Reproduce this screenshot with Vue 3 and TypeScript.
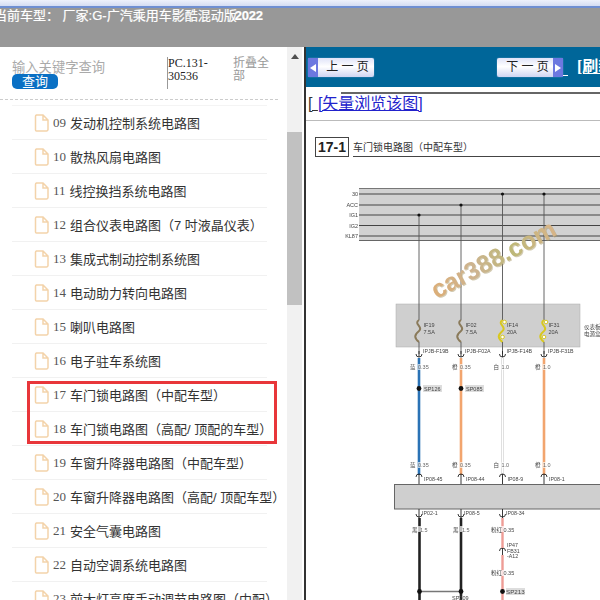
<script setup lang="ts">
const rows: [string, string][] = [
  ['09', '发动机控制系统电路图'],
  ['10', '散热风扇电路图'],
  ['11', '线控换挡系统电路图'],
  ['12', '组合仪表电路图（7 吋液晶仪表）'],
  ['13', '集成式制动控制系统图'],
  ['14', '电动助力转向电路图'],
  ['15', '喇叭电路图'],
  ['16', '电子驻车系统图'],
  ['17', '车门锁电路图（中配车型）'],
  ['18', '车门锁电路图（高配/ 顶配的车型）'],
  ['19', '车窗升降器电路图（中配车型）'],
  ['20', '车窗升降器电路图（高配/ 顶配车型）'],
  ['21', '安全气囊电路图'],
  ['22', '自动空调系统电路图'],
  ['23', '前大灯高度手动调节电路图（中配）'],
]
const busLines = [
  { y: 194, label: '30' },
  { y: 205, label: 'ACC' },
  { y: 215, label: 'IG1' },
  { y: 225.5, label: 'IG2' },
  { y: 236, label: 'KL87' },
]
const fuses = [
  { x: 419, top: 215, name: 'IF19', amp: '7.5A', color: '#8a7a5a', yellow: false, term: 'IPJB-F19B', wire: '#2a72b5', cn: '蓝', size: '0.35', sp: 'SP126', bot: 'IP08-45' },
  { x: 461, top: 205, name: 'IF02', amp: '7.5A', color: '#8a7a5a', yellow: false, term: 'IPJB-F02A', wire: '#f2a56e', cn: '橙', size: '0.35', sp: 'SP085', bot: 'IP08-44' },
  { x: 502.5, top: 194, name: 'IF14', amp: '20A', color: '#d8c820', yellow: true, term: 'IPJB-F14B', wire: '#d8d8d8', cn: '白', size: '1.0', sp: '', bot: 'IP08-9' },
  { x: 544, top: 194, name: 'IF31', amp: '20A', color: '#d8c820', yellow: true, term: 'IPJB-F31B', wire: '#f2a56e', cn: '橙', size: '1.0', sp: '', bot: 'IP08-1' },
]
</script>

<template>
  <div class="page">
    <div class="strip"></div>
    <div class="topbar"><span class="car">当前车型： 厂家:G-广汽乘用车影酷混动版<b class="yr">2022</b></span></div>
    <div class="main">
      <aside class="left">
        <div class="leftscroll">
          <div class="search">
            <div class="searchcol">
              <div class="placeholder">输入关键字查询</div>
              <div class="btn">查询</div>
            </div>
            <div class="code">PC.131-30536</div>
            <div class="fold">折叠全部</div>
          </div>
          <ul class="list">
            <li v-for="r in rows" :key="r[0]" class="row">
              <svg class="ficon" width="15" height="18" viewBox="0 0 15 18">
                <path d="M2.500 1h6.500l5 5v9.500a1.500 1.500 0 0 1-1.500 1.500h-10a1 1 0 0 1-1-1V2.500a1.500 1.500 0 0 1 1-1.500z M9 1v5h5" fill="none" stroke="#f3d3aa" stroke-width="1.500" />
              </svg>
              <span class="num">{{ r[0] }}</span>
              <span class="name">{{ r[1] }}</span>
            </li>
          </ul>
          <div class="redbox"></div>
        </div>
        <div class="scrollbar">
          <div class="arrow"></div>
          <div class="thumb"></div>
        </div>
      </aside>
      <section class="right">
        <div class="nav">
          <div class="pagebtn prev">
            <span class="tip"><i class="ar ar-l"></i></span>
            <span class="pt">上 一 页</span>
          </div>
          <div class="pagebtn next">
            <span class="pt">下 一 页</span>
            <span class="tip"><i class="ar ar-r"></i></span>
          </div>
          <span class="under"></span>
          <span class="refresh">[刷新]</span>
        </div>
        <div class="linkrow">
          <span class="overline"></span>
          <span class="br">[ </span><a class="vlink">[矢量浏览该图]</a>
        </div>
        <div class="sheet">
          <div class="title">
            <span class="tbox">17-1</span>
            <span class="ttext">车门锁电路图（中配车型）</span>
          </div>
          <svg class="diagram" width="294" height="433" viewBox="306 167 294 433">
            <defs>
              <linearGradient id="wm" x1="0" y1="0" x2="1" y2="0">
                <stop offset="0" stop-color="#dcae78" />
                <stop offset="0.35" stop-color="#cdb490" />
                <stop offset="0.65" stop-color="#bdb878" />
                <stop offset="1" stop-color="#d8b488" />
              </linearGradient>
            </defs>
            <rect x="359" y="188" width="241" height="53" fill="#d2d2d2" />
            <line x1="359" x2="600" y1="188.500" y2="188.500" stroke="#777" />
            <line x1="359" x2="600" y1="240.500" y2="240.500" stroke="#666" />
            <g v-for="b in busLines" :key="b.label">
              <line x1="359" x2="600" :y1="b.y" :y2="b.y" stroke="#444" stroke-width="1.200" />
              <text x="358" :y="b.y + 2" text-anchor="end" class="t5">{{ b.label }}</text>
            </g>
            <rect x="396" y="304" width="184" height="43" fill="#cfcfcf" stroke="#aaa" stroke-width="0.500" />
            <text x="584" y="329" class="t5">仪表板</text>
            <text x="584" y="336" class="t5">电源盒</text>

            <g v-for="f in fuses" :key="f.name">
              <line :x1="f.x" :x2="f.x" :y1="f.top" y2="320" stroke="#555" stroke-width="0.900" />
              <circle :cx="f.x" :cy="f.top" r="1.600" fill="#111" />
              <path :d="`M${f.x} 320c-6 4 5 7 0 11s-5 7 0 11`" fill="none" :stroke="f.color" stroke-width="2" />
              <template v-if="f.yellow">
                <circle :cx="f.x + 2" cy="322" r="1.800" fill="#fff" :stroke="f.color" />
                <circle :cx="f.x" cy="337" r="1.800" fill="#fff" :stroke="f.color" />
              </template>
              <text :x="f.x + 4.500" y="327" class="t5">{{ f.name }}</text>
              <text :x="f.x + 4.500" y="333.500" class="t5">{{ f.amp }}</text>
              <line :x1="f.x" :x2="f.x" y1="342" y2="354" stroke="#555" stroke-width="0.900" />
              <text :x="f.x + 4" y="352.500" class="t45">{{ f.term }}</text>
              <path :d="`M${f.x - 3} 354a3 3 0 0 0 6 0M${f.x} 351v6`" fill="none" stroke="#222" stroke-width="0.900" />
              <line :x1="f.x" :x2="f.x" y1="358" y2="475" :stroke="f.wire" stroke-width="2.600" />
              <rect v-if="f.yellow && f.cn === '白'" :x="f.x - 0.500" y="358" width="1" height="117" fill="#fff" />
              <rect :x="f.x - 1" y="364" width="11" height="6" fill="#fff" opacity="0.65" />
              <text :x="f.x - 9" y="369" class="t5">{{ f.cn }}</text>
              <text :x="f.x - 1" y="369" class="t5 shade">{{ f.size }}</text>
              <template v-if="f.sp">
                <circle :cx="f.x" cy="388.500" r="2.400" fill="#111" />
                <rect :x="f.x + 4" y="385" width="19" height="7" fill="#ddd" />
                <text :x="f.x + 5" y="390.500" class="t5">{{ f.sp }}</text>
              </template>
              <rect :x="f.x - 1" y="462" width="11" height="6" fill="#fff" opacity="0.65" />
              <text :x="f.x - 9" y="467" class="t5">{{ f.cn }}</text>
              <text :x="f.x - 1" y="467" class="t5 shade">{{ f.size }}</text>
              <path :d="`M${f.x - 3} 477a3 3 0 0 1 6 0M${f.x} 474v10`" fill="none" stroke="#222" stroke-width="0.900" />
              <text :x="f.x + 5" y="481" class="t45">{{ f.bot }}</text>
            </g>

            <rect x="394.500" y="484.500" width="206" height="24.500" fill="#cfcfcf" stroke="#666" />

            <g fill="none" stroke="#222" stroke-width="0.900">
              <path d="M416 514a3 3 0 0 0 6 0M419 509v9" />
              <path d="M458 514a3 3 0 0 0 6 0M461 509v9" />
              <path d="M499.500 514a3 3 0 0 0 6 0M502.500 509v9" />
              <path d="M499.500 551a3 3 0 0 1 6 0M502.500 548v7" />
            </g>
            <text x="422" y="515" class="t45">IP02-1</text>
            <text x="464" y="515" class="t45">IP08-5</text>
            <text x="506" y="515" class="t45">IP08-34</text>

            <line x1="419.500" x2="419.500" y1="518" y2="600" stroke="#222" stroke-width="2.600" />
            <line x1="461" x2="461" y1="518" y2="600" stroke="#222" stroke-width="2.600" />
            <line x1="419.500" x2="461" y1="591.500" y2="591.500" stroke="#777" stroke-width="1.400" />
            <circle cx="419.500" cy="591.500" r="2.400" fill="#111" />
            <circle cx="461" cy="591.500" r="2.400" fill="#111" />
            <line x1="502.500" x2="502.500" y1="518" y2="548" stroke="#ee9c96" stroke-width="2.400" />
            <line x1="502.500" x2="502.500" y1="555" y2="600" stroke="#ee9c96" stroke-width="2.400" />
            <circle cx="502.500" cy="591.500" r="2.400" fill="#111" />
            <rect x="418" y="526" width="10" height="6" fill="#fff" opacity="0.7" />
            <rect x="460" y="526" width="10" height="6" fill="#fff" opacity="0.7" />
            <rect x="490" y="526" width="32" height="6" fill="#fff" opacity="0.7" />
            <rect x="490" y="570" width="32" height="6" fill="#fff" opacity="0.7" />
            <text x="412" y="531.500" class="t5">黑</text>
            <text x="420" y="531.500" class="t5 shade">1.5</text>
            <text x="453" y="531.500" class="t5">黑</text>
            <text x="462" y="531.500" class="t5 shade">1.5</text>
            <text x="491" y="531.500" class="t5">粉红 0.35</text>
            <text x="507" y="547" class="t45">IP47</text>
            <text x="507" y="552.500" class="t45">FB31</text>
            <text x="507" y="558" class="t45">-A12</text>
            <text x="491" y="575" class="t5">粉红 0.35</text>
            <rect x="506" y="588" width="19" height="7" fill="#ddd" />
            <text x="506" y="594" class="t6">SP213</text>
            <text x="452" y="600" class="t5">SP209</text>

            <text x="437.500" y="300" transform="rotate(-28 437.500 300)" class="wm wm-shadow">car388.com</text>
            <text x="436.500" y="299" transform="rotate(-28 436.500 299)" class="wm" fill="url(#wm)">car388.com</text>
          </svg>
        </div>
      </section>
    </div>
  </div>
</template>

<style>
html, body { margin: 0; padding: 0; background: #fff; }
</style>

<style scoped>
.page {
  width: 600px;
  height: 600px;
  overflow: hidden;
  display: flex;
  flex-direction: column;
  font-family: "Liberation Sans", "Noto Sans CJK SC", sans-serif;
}
.strip {
  height: 8px;
  flex: none;
  box-sizing: border-box;
  background: linear-gradient(#eef1fb, #d4dcf2);
  border-bottom: 2px solid #6f8fd2;
}
.topbar {
  height: 39px;
  flex: none;
  background: #989898;
  color: #fff;
  font-size: 13px;
  line-height: 15px;
  overflow: hidden;
}
.car { display: block; margin-left: -6px; white-space: pre; -webkit-text-stroke: 0.2px #fff; }
.yr { font-weight: 700; margin-left: -2px; letter-spacing: -0.2px; }
.main { flex: 1; display: flex; min-height: 0; }
.left { width: 304px; flex: none; display: flex; background: #fff; }
.leftscroll { width: 287px; flex: none; position: relative; overflow: hidden; }
.search {
  height: 52px;
  margin-right: 9px;
  border-bottom: 1px dashed #ccc;
  display: flex;
}
.searchcol { width: 167px; padding: 14px 0 0 12px; flex: none; box-sizing: border-box; }
.placeholder { font-size: 13.300px; line-height: 13px; color: #aaa; white-space: nowrap; }
.btn {
  width: 46px;
  height: 15px;
  background: #0a70c4;
  border-radius: 5px;
  color: #fff;
  font-size: 13px;
  line-height: 15px;
  text-align: center;
}
.code {
  width: 52px;
  height: 32px;
  margin-top: 10px;
  flex: none;
  border-left: 1px solid #999;
  font-family: "Liberation Serif", serif;
  font-size: 12px;
  line-height: 13px;
  color: #222;
}
.fold { width: 37px; margin: 10px 0 0 13px; font-size: 12px; line-height: 13px; color: #999; flex: none; }
.list { list-style: none; margin: 5px 0 0 12px; padding: 0; width: 255px; border-top: 1px solid #f4f4f4; }
.row {
  height: 34px;
  box-sizing: border-box;
  border-bottom: 1px solid #f1f1f1;
  display: flex;
  align-items: center;
  padding-left: 23px;
  white-space: nowrap;
  font-size: 13px;
  color: #333;
}
.ficon { flex: none; margin-right: 4px; margin-left: -1px; }
.num { font-family: "Liberation Serif", serif; color: #555; margin-right: 4px; }
.name { color: #333; }
.redbox {
  position: absolute;
  left: 27px;
  top: 334px;
  width: 250px;
  height: 63px;
  box-sizing: border-box;
  border: 3px solid #e8363a;
}
.scrollbar { width: 15px; flex: none; background: #f1f1f1; position: relative; }
.arrow {
  width: 0; height: 0;
  margin: 7px auto 0;
  border-left: 4px solid transparent;
  border-right: 4px solid transparent;
  border-bottom: 5px solid #505050;
}
.thumb { position: absolute; left: 0; right: 0; top: 85px; height: 173px; background: #c1c1c1; }
.right {
  flex: 1;
  min-width: 0;
  border-left: 2px solid #333;
  display: flex;
  flex-direction: column;
  background: #fff;
}
.nav {
  height: 40px;
  flex: none;
  background: #006699;
  display: flex;
  align-items: flex-start;
  padding: 11px 0 0 2px;
  box-sizing: border-box;
  color: #fff;
  overflow: hidden;
}
.pagebtn {
  height: 19px;
  width: 66px;
  flex: none;
  display: flex;
  background: linear-gradient(#dfe3f8, #ffffff 45%, #cfd4f2);
  border-radius: 2px;
  color: #222;
  font-size: 12px;
  line-height: 18px;
  box-shadow: 0 0 1px #cdd3f5;
}
.next { margin-left: 123px; }
.prev .pt { padding-left: 3px; }
.next .pt { padding-left: 5px; }
.pt { flex: 1; text-align: center; white-space: nowrap; }
.tip { width: 10px; background: #6c78e0; display: flex; align-items: center; justify-content: center; }
.ar { display: block; width: 0; height: 0; border-top: 4px solid transparent; border-bottom: 4px solid transparent; }
.ar-l { border-right: 6px solid #fff; }
.ar-r { border-left: 6px solid #fff; }
.under { width: 5px; height: 1px; margin-top: 17px; background: #fff; flex: none; }
.refresh {
  margin-left: 9px;
  font-family: "Liberation Serif", "Noto Sans CJK SC", serif;
  font-size: 16px;
  line-height: 18px;
  font-weight: 700;
  text-decoration: underline;
  white-space: nowrap;
}
.linkrow {
  height: 34px;
  flex: none;
  box-sizing: border-box;
  border-bottom: 1px solid #bbb;
  position: relative;
  font-size: 16px;
  line-height: 34px;
  padding-left: 2px;
  white-space: pre;
  color: #333;
}
.br { text-decoration: underline; letter-spacing: 0.5px; }
.overline { position: absolute; left: 35px; right: 0; top: 5px; height: 2px; background: #666; }
.vlink { color: #2222cc; text-decoration: underline; }
.sheet { flex: 1; position: relative; min-height: 0; overflow: hidden; }
.title { display: flex; align-items: flex-end; padding: 15px 0 0 9px; height: 46px; box-sizing: border-box; }
.tbox {
  width: 34px;
  height: 20px;
  box-sizing: border-box;
  border: 1px solid #444;
  font-size: 14px;
  line-height: 18px;
  font-weight: 700;
  text-align: center;
  color: #222;
  flex: none;
  margin-bottom: 10px;
}
.ttext {
  flex: 1;
  margin-left: 4px;
  margin-bottom: 10px;
  font-size: 10px;
  line-height: 17px;
  color: #333;
  border-bottom: 1px solid #444;
  white-space: nowrap;
}
.diagram { display: block; filter: blur(0.45px); }
.t5 { font-size: 5.500px; fill: #444; font-family: "Liberation Sans", "Noto Sans CJK SC", sans-serif; }
.t45 { font-size: 5.300px; fill: #444; font-family: "Liberation Sans", sans-serif; }
.t6 { font-size: 6.200px; fill: #444; font-family: "Liberation Sans", sans-serif; }
.shade { fill: #666; }
.wm { font-size: 25px; font-weight: 700; font-family: "Liberation Sans", sans-serif; }
.wm-shadow { fill: #a89868; opacity: 0.5; }
</style>
